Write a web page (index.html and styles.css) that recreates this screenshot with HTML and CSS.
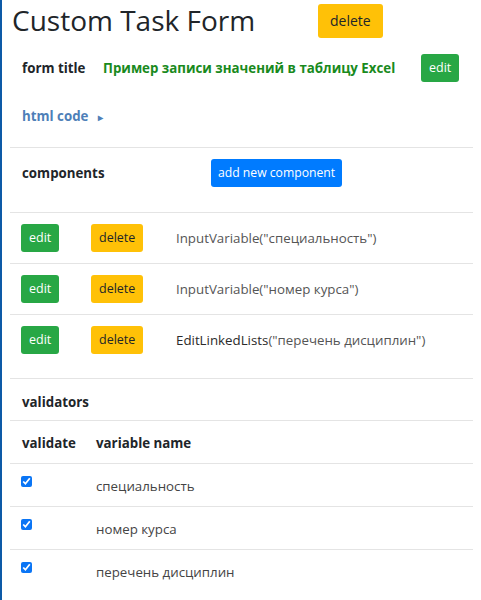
FILE: index.html
```html
<!DOCTYPE html>
<html>
<head>
<meta charset="utf-8">
<link rel="stylesheet" href="styles.css">
</head>
<body>
<div class="page">
  <div class="head">
    <h1 class="title">Custom Task Form</h1>
    <button class="btn btn-warning btn-lg">delete</button>
  </div>
  <div class="form-title">
    <span class="label">form title</span>
    <span class="green">Пример записи значений в таблицу Excel</span>
    <button class="btn btn-success btn-sm">edit</button>
  </div>
  <div class="html-code"><span>html code</span><span class="tri">&#9656;</span></div>

  <div class="components">
    <span class="label">components</span>
    <button class="btn btn-primary btn-sm btn-add">add new component</button>
  </div>

  <div class="comp-list">
    <div class="comp-row">
      <div><button class="btn btn-success btn-sm">edit</button></div>
      <div><button class="btn btn-warning btn-sm">delete</button></div>
      <div class="comp-text">InputVariable("специальность")</div>
    </div>
    <div class="comp-row">
      <div><button class="btn btn-success btn-sm">edit</button></div>
      <div><button class="btn btn-warning btn-sm">delete</button></div>
      <div class="comp-text">InputVariable("номер курса")</div>
    </div>
    <div class="comp-row">
      <div><button class="btn btn-success btn-sm">edit</button></div>
      <div><button class="btn btn-warning btn-sm">delete</button></div>
      <div class="comp-text"><span class="dark">EditLinkedLists</span>("перечень дисциплин")</div>
    </div>
  </div>

  <div class="validators"><span class="label">validators</span></div>

  <table class="vtable">
    <thead>
      <tr><th class="c1">validate</th><th>variable name</th></tr>
    </thead>
    <tbody>
      <tr><td class="c1"><input type="checkbox" checked></td><td>специальность</td></tr>
      <tr><td class="c1"><input type="checkbox" checked></td><td>номер курса</td></tr>
      <tr><td class="c1"><input type="checkbox" checked></td><td>перечень дисциплин</td></tr>
    </tbody>
  </table>
</div>
</body>
</html>
```

FILE: styles.css
```css
html, body {
  margin: 0;
  padding: 0;
  background: #fff;
}
body {
  font-family: "Open Sans", "Noto Sans", sans-serif;
  font-size: 13.3px;
  color: #212529;
}
.page {
  border-left: 2px solid #0d5aa7;
  min-height: 600px;
  box-sizing: border-box;
  padding: 0 8px 0 8px;
}
.btn {
  font-family: "Open Sans", "Noto Sans", sans-serif;
  border: 1px solid transparent;
  border-radius: 3px;
  cursor: pointer;
  line-height: 1;
  box-sizing: border-box;
}
.btn-lg {
  height: 34px;
  padding: 0 11px;
  font-size: 14px;
}
.btn-sm {
  height: 28px;
  padding: 0 7px;
  font-size: 12.5px;
}
.btn-add { padding: 0 6px; font-size: 12.2px; }
.btn-warning { background: #ffc107; color: #212529; }
.btn-success { background: #28a745; color: #fff; }
.btn-primary { background: #007bff; color: #fff; }

.head {
  display: flex;
  align-items: flex-start;
  height: 46px;
  padding-left: 2px;
}
.title {
  margin: 0;
  width: 306px;
  font-size: 28px;
  font-weight: 400;
  line-height: 40px;
}
.head .btn { margin-top: 4px; }

.label { font-weight: 700; }

.form-title {
  display: grid;
  grid-template-columns: 81px 318px auto;
  align-items: center;
  height: 28px;
  padding: 8px 0 0 12px;
}
.form-title .btn { justify-self: start; }
.green {
  color: #198a1d;
  font-weight: 700;
}
.html-code {
  margin-top: 24px;
  padding: 0 0 20px 12px;
  line-height: 20px;
  color: #4e7fb8;
  font-weight: 700;
}
.tri {
  font-size: 10px;
  margin-left: 10px;
}
.components {
  border-top: 1px solid #e4e4e4;
  display: grid;
  grid-template-columns: 189px auto;
  align-items: center;
  padding: 11px 0 25px 12px;
}
.components .btn { justify-self: start; }

.comp-list { padding-bottom: 13px; }
.comp-row {
  border-top: 1px solid #e4e4e4;
  display: grid;
  grid-template-columns: 70px 85px auto;
  align-items: center;
  padding: 11px 0 11px 11px;
}
.comp-text { color: #555; }
.dark { color: #2b2b2b; }

.validators {
  border-top: 1px solid #e4e4e4;
  padding: 13px 0 8px 12px;
  line-height: 20px;
}
.vtable {
  width: 100%;
  border-collapse: collapse;
}
.vtable th, .vtable td {
  border-top: 1px solid #e4e4e4;
  text-align: left;
  vertical-align: top;
  padding: 12px 0 10px 0;
  line-height: 20px;
}
.vtable th { font-weight: 700; }
.vtable td { color: #444; }
.vtable .c1 { width: 74px; padding-left: 12px; }
.vtable th:not(.c1), .vtable td:not(.c1) { padding-left: 0; }
.vtable input {
  margin: 0 0 0 -1px;
  width: 11px;
  height: 11px;
  accent-color: #0a75f5;
  vertical-align: top;
}
```
